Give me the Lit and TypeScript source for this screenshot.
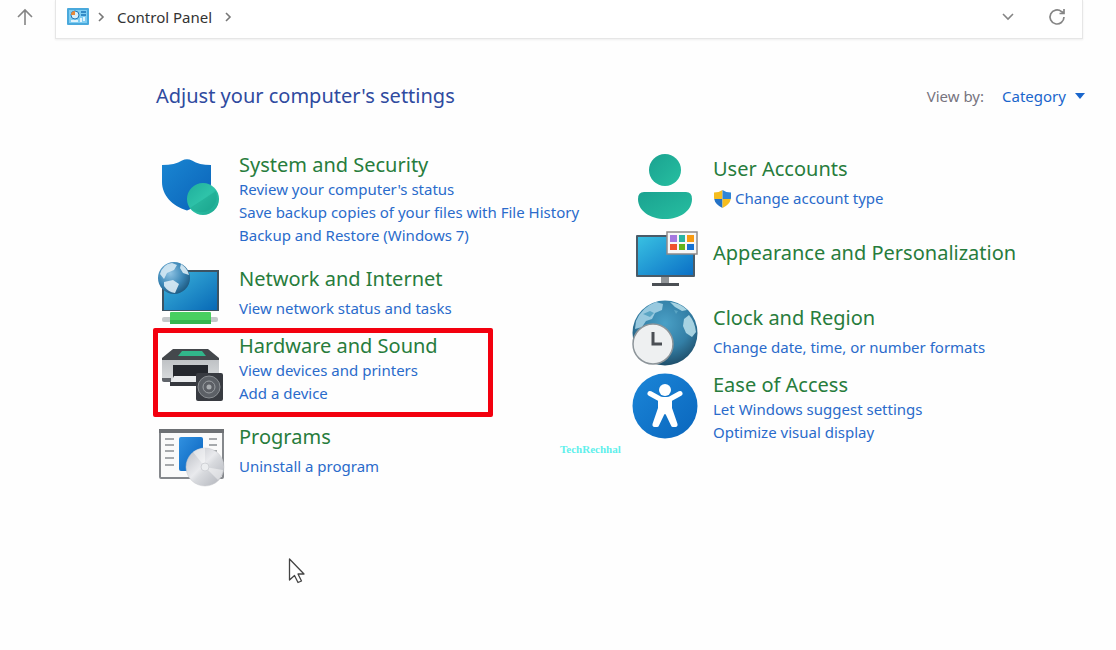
import { LitElement, html, css, svg, nothing, type TemplateResult } from "lit";
import { customElement } from "lit/decorators.js";
import { classMap } from "lit/directives/class-map.js";

interface Task {
  label: string;
  shield?: boolean;
}

interface Category {
  title: string;
  icon: string;
  tasks: Task[];
  marked?: boolean;
}

const LEFT: Category[] = [
  {
    title: "System and Security",
    icon: "security",
    tasks: [
      { label: "Review your computer's status" },
      { label: "Save backup copies of your files with File History" },
      { label: "Backup and Restore (Windows 7)" },
    ],
  },
  { title: "Network and Internet", icon: "network", tasks: [{ label: "View network status and tasks" }] },
  {
    title: "Hardware and Sound",
    icon: "hardware",
    marked: true,
    tasks: [{ label: "View devices and printers" }, { label: "Add a device" }],
  },
  { title: "Programs", icon: "programs", tasks: [{ label: "Uninstall a program" }] },
];

const RIGHT: Category[] = [
  { title: "User Accounts", icon: "users", tasks: [{ label: "Change account type", shield: true }] },
  { title: "Appearance and Personalization", icon: "appearance", tasks: [] },
  { title: "Clock and Region", icon: "clock", tasks: [{ label: "Change date, time, or number formats" }] },
  {
    title: "Ease of Access",
    icon: "access",
    tasks: [{ label: "Let Windows suggest settings" }, { label: "Optimize visual display" }],
  },
];

// Every icon is drawn on a 72 x 72 canvas.
const ICONS: Record<string, TemplateResult> = {
  security: svg`
    <defs>
      <linearGradient id="a" x1="0" y1="0" x2="1" y2="1"><stop offset="0" stop-color="#1a86d2"/><stop offset="1" stop-color="#0a62b8"/></linearGradient>
      <linearGradient id="b" x1="0" y1="0" x2="1" y2="1"><stop offset="0" stop-color="#1fae9c"/><stop offset=".5" stop-color="#2fc3a9"/><stop offset="1" stop-color="#1aa58d"/></linearGradient>
    </defs>
    <path d="M6 16q13 0 20-4.500q5-2.500 10 0q7 4.500 19 4.500v19c0 12-9 21-24 26.500C16 57 6 46 6 33z" fill="url(#a)"/>
    <circle cx="47" cy="50" r="16" fill="url(#b)"/>
    <path d="M34 59l26-17a16 16 0 0 1-26 17z" fill="#159c83" opacity=".35"/>`,
  network: svg`
    <defs>
      <linearGradient id="a" x1="0" y1="0" x2="1" y2="1"><stop offset="0" stop-color="#3cb4dc"/><stop offset="1" stop-color="#0869b6"/></linearGradient>
      <radialGradient id="b" cx=".38" cy=".35" r=".7"><stop offset="0" stop-color="#8fc3e3"/><stop offset=".6" stop-color="#3a86b6"/><stop offset="1" stop-color="#1d587f"/></radialGradient>
    </defs>
    <rect x="6" y="13" width="57" height="41" fill="#3d5362"/>
    <rect x="8" y="15" width="53" height="38" fill="url(#a)"/>
    <rect x="6" y="60" width="56" height="5" rx="2" fill="#c4c9cb"/>
    <rect x="14" y="55" width="41" height="12" rx="1" fill="#48cf60"/>
    <path d="M14 63h41v4H14z" fill="#35b54f"/>
    <circle cx="18" cy="21" r="16" fill="url(#b)"/>
    <path d="M4 17Q7 7 16 6l5 2-3 5-7 3-3 6z" fill="#d5e9f4" opacity=".9"/>
    <path d="M25 7q7 5 8 11l-6-2-3-5zM8 25l9-2 6 4-4 9q-7-1-11-7z" fill="#dcecf5" opacity=".9"/>`,
  hardware: svg`
    <defs>
      <linearGradient id="a" x1="0" y1="0" x2="0" y2="1"><stop offset="0" stop-color="#bfc2c5"/><stop offset="1" stop-color="#d9dcde"/></linearGradient>
    </defs>
    <g transform="translate(0 9)">
      <path d="M17 10h35l11 9v4H6v-4z" fill="#44484c"/>
      <path d="M26 12h20l4 5H22z" fill="#31b68a"/>
      <path d="M6 21h57v21H6z" fill="url(#a)"/>
      <path d="M6 39h9v4H8q-2 0-2-2z" fill="#60646a"/>
      <path d="M17 26h35v13H17z" fill="#24272d"/>
      <path d="M18 37h32v6H15z" fill="#e9ebed"/>
      <path d="M14 43h28v4H14z" fill="#35383e"/>
      <rect x="40" y="34" width="27" height="28" rx="2" fill="#383b41"/>
      <circle cx="53" cy="48" r="11" fill="#5c6066" stroke="#8a8e92" stroke-width="1"/>
      <circle cx="53" cy="48" r="6" fill="#5c5f65" stroke="#9b9fa3" stroke-width="1"/>
      <circle cx="53" cy="48" r="2.500" fill="#a9adb0"/>
    </g>`,
  programs: svg`
    <defs>
      <linearGradient id="a" x1="0" y1="0" x2="1" y2="1"><stop offset="0" stop-color="#3191e0"/><stop offset="1" stop-color="#0761bd"/></linearGradient>
      <linearGradient id="b" x1="0" y1="0" x2="1" y2="1"><stop offset="0" stop-color="#b9bcc3"/><stop offset=".45" stop-color="#e9eaed"/><stop offset=".55" stop-color="#d8dade"/><stop offset="1" stop-color="#aeb1b8"/></linearGradient>
    </defs>
    <g transform="translate(0 4)">
      <rect x="4" y="11" width="63" height="48" rx="1" fill="#fafafa" stroke="#85888c" stroke-width="2"/>
      <path d="M3 10h65v4H3z" fill="#6d7074"/>
      <path d="M9 20h9M9 26h9M9 32h9M9 39h9M9 46h9M53 20h8M53 26h8M53 32h8" stroke="#8b8e92" stroke-width="1.500"/>
      <rect x="23" y="18" width="24" height="34" rx="2" fill="url(#a)"/>
      <circle cx="49" cy="48" r="19" fill="url(#b)" stroke="#c6c8cc" stroke-width=".5"/>
      <path d="M49 48L37 33q5-4 12-4zM49 48l13 13q4-4 5-10z" fill="#fff" opacity=".45"/>
      <circle cx="49" cy="48" r="4" fill="#eceef0" stroke="#d0d2d6" stroke-width="1"/>
    </g>`,
  users: svg`
    <defs>
      <linearGradient id="a" x1="0" y1="0" x2="1" y2="1"><stop offset="0" stop-color="#1aa290"/><stop offset="1" stop-color="#27bfa1"/></linearGradient>
    </defs>
    <g transform="translate(0 4)">
      <circle cx="35" cy="19" r="16" fill="url(#a)"/>
      <path d="M14 41h42q6 0 6 7c0 12-12 20-27 20S8 60 8 48q0-7 6-7z" fill="url(#a)"/>
    </g>`,
  appearance: svg`
    <defs>
      <linearGradient id="a" x1="0" y1="0" x2="1" y2="1"><stop offset="0" stop-color="#38c0e2"/><stop offset="1" stop-color="#0b70c6"/></linearGradient>
    </defs>
    <g transform="translate(0 7)">
      <rect x="6" y="11" width="59" height="42" rx="1" fill="#4a5b68"/>
      <rect x="8" y="13" width="55" height="38" fill="url(#a)"/>
      <path d="M31 53h8v7h-8z" fill="#929699"/>
      <path d="M22 59h27v3H22z" fill="#4b4f54"/>
      <rect x="37" y="8" width="30" height="22" fill="#f7f7f7" stroke="#8f8a8a" stroke-width="1.500"/>
      <path d="M40 11h7v7h-7z" fill="#a477df"/><path d="M49 11h6v7h-6z" fill="#29b4a2"/><path d="M57 11h7v7h-7z" fill="#f79a12"/>
      <path d="M40 20h7v6h-7z" fill="#f0512c"/><path d="M49 20h6v6h-6z" fill="#64b31b"/><path d="M57 20h7v6h-7z" fill="#1572d4"/>
    </g>`,
  clock: svg`
    <defs>
      <radialGradient id="a" cx=".5" cy=".35" r=".65"><stop offset="0" stop-color="#4aa0c6"/><stop offset=".6" stop-color="#337fa6"/><stop offset="1" stop-color="#1f4f6b"/></radialGradient>
    </defs>
    <g transform="translate(0 1)">
      <circle cx="35" cy="36" r="32.500" fill="url(#a)"/>
      <path d="M6 24Q12 10 26 5l7 2-1 6-7 3-3 6-6 2-4 6-7 2z" fill="#a3d0e4" opacity=".9"/>
      <path d="M40 5q10 1 17 8l-5 1-7-4zM54 22l5-4q6 7 7 17l-4 5-6-4-3-7z" fill="#b4dbe8" opacity=".9"/>
      <path d="M13 17l7-3 4 2-4 4zM44 13l4 1-2 3z" fill="#5aa5c4"/>
      <circle cx="23" cy="47" r="20" fill="#eef0f1" stroke="#8c9499" stroke-width="1.500"/>
      <path d="M23 35v12h9" fill="none" stroke="#4b4f54" stroke-width="3"/>
    </g>`,
  access: svg`
    <defs>
      <linearGradient id="a" x1="0" y1="0" x2="1" y2="1"><stop offset="0" stop-color="#1b86d8"/><stop offset="1" stop-color="#0a66bd"/></linearGradient>
    </defs>
    <g transform="translate(0 1)">
      <circle cx="35" cy="36" r="32.500" fill="url(#a)"/>
      <circle cx="35" cy="20" r="6" fill="#fff"/>
      <path d="M20 23.500l10 5.500q5 1.500 10 0l10-5.500" fill="none" stroke="#fff" stroke-width="5" stroke-linecap="round" stroke-linejoin="round"/>
      <path d="M28 27h14v11l5.500 16q.5 2.500-2 3h-2.500q-1.500 0-2-1.500L36 45q-1-2-2 0l-5 10.500q-.5 1.500-2 1.500h-2.500q-2.500-.5-2-3L28 38z" fill="#fff"/>
    </g>`,
};

@customElement("cp-icon")
class CpIcon extends LitElement {
  static properties = { name: {} };
  declare name: string;
  static styles = css`
    :host {
      display: block;
    }
    .art {
      display: block;
      width: 72px;
      height: 72px;
      overflow: visible;
    }
  `;
  render() {
    return html`<svg class="art" viewBox="0 0 72 72" aria-hidden="true">${ICONS[this.name]}</svg>`;
  }
}

@customElement("app-root")
class AppRoot extends LitElement {
  static styles = css`
    :host {
      display: block;
      position: relative;
      min-height: 100vh;
      background: #fefefe;
      font-family: "Noto Sans", "Open Sans", sans-serif;
      font-size: 15px;
      color: #333;
    }
    a {
      color: #2a6bcb;
      text-decoration: none;
    }
    button {
      display: grid;
      place-items: center;
      padding: 0;
      border: 0;
      background: none;
      color: #858585;
    }
    .toolbar {
      display: flex;
      padding-right: 33px;
    }
    .up {
      width: 49px;
      height: 33px;
      margin-right: 6px;
    }
    .address {
      flex: 1;
      display: flex;
      align-items: center;
      height: 33px;
      padding: 0 16px 5px 11px;
      border: 1px solid #e6e6e6;
      border-top: 0;
      box-shadow: 0 1px 2px #eee;
      background: #fff;
    }
    .place {
      margin-right: 8px;
    }
    .crumb {
      margin: 0 12px;
      color: #333;
    }
    .address .drop {
      margin-left: auto;
      margin-right: 34px;
    }
    .heading {
      display: flex;
      align-items: center;
      justify-content: space-between;
      margin: 43px 31px 0 156px;
    }
    h1 {
      margin: 0;
      font-size: 20px;
      line-height: 28px;
      font-weight: 400;
      color: #2f4a9f;
    }
    .view {
      display: flex;
      align-items: center;
      color: #77747f;
    }
    .choice {
      display: grid;
      align-items: center;
      margin-left: 18px;
      color: #1a66cc;
    }
    .choice select {
      grid-area: 1 / 1;
      width: 83px;
      padding: 0;
      border: 0;
      appearance: none;
      background: none;
      font: inherit;
      color: inherit;
    }
    .choice svg {
      grid-area: 1 / 1;
      justify-self: end;
      pointer-events: none;
    }
    .categories {
      display: grid;
      grid-template-columns: 1fr 1fr;
      padding: 42px 12px 0 156px;
    }
    .column {
      display: flex;
      flex-direction: column;
      gap: 9px;
    }
    .item {
      position: relative;
      display: flex;
      align-items: center;
      gap: 11px;
      min-height: 62px;
    }
    .item cp-icon {
      margin: -6px 0;
    }
    .item.tall {
      align-items: flex-start;
      margin-bottom: 6px;
    }
    .item.tall cp-icon {
      margin: -3px 0;
    }
    .item.bare {
      min-height: 60px;
      margin-bottom: 9px;
    }
    .item.marked::after {
      content: "";
      position: absolute;
      inset: -5px auto -12px -3px;
      width: 330px;
      border: 5px solid #f3000e;
      border-radius: 2px;
      pointer-events: none;
    }
    h2 {
      margin: 0;
      font-size: 20px;
      line-height: 26px;
      font-weight: 400;
    }
    h2 a {
      color: #277c3c;
    }
    ul {
      margin: 0;
      padding: 0;
      list-style: none;
      line-height: 23px;
    }
    .single {
      padding-top: 5px;
    }
    .task {
      display: flex;
      align-items: center;
      gap: 3px;
    }
    .watermark {
      position: absolute;
      left: 560px;
      top: 442px;
      font: bold 11px/14px "Liberation Serif", serif;
      color: #5ff0ec;
    }
    .pointer {
      position: absolute;
      left: 287px;
      top: 557px;
    }
  `;

  private chevron() {
    return html`<svg width="8" height="10" viewBox="0 0 8 10" fill="none" stroke="#777" stroke-width="1.600" aria-hidden="true"><path d="M2 1l4 4-4 4" /></svg>`;
  }

  private shield() {
    return html`<svg width="19" height="20" viewBox="0 0 19 20" aria-hidden="true">
      <path d="M9.500 1Q6 3.500 1 3.500V9l.2 1h8.300z" fill="#f5bd1f" />
      <path d="M9.500 1Q13 3.500 18 3.500V9l-.2 1H9.500z" fill="#2f86d6" />
      <path d="M1.200 10h8.300v9Q2.200 15.500 1.200 10z" fill="#2472c6" />
      <path d="M17.800 10H9.500v9q7.300-3.500 8.300-9z" fill="#f5bd1f" />
    </svg>`;
  }

  private item(c: Category) {
    const n = c.tasks.length;
    const kind = { item: true, tall: n > 1, bare: n === 0, marked: !!c.marked };
    return html`<section class=${classMap(kind)}>
      <cp-icon name=${c.icon}></cp-icon>
      <div>
        <h2><a href="#">${c.title}</a></h2>
        ${n
          ? html`<ul class=${classMap({ single: n === 1 })}>
              ${c.tasks.map((t) => html`<li><a class="task" href="#">${t.shield ? this.shield() : nothing}${t.label}</a></li>`)}
            </ul>`
          : nothing}
      </div>
    </section>`;
  }

  render() {
    return html`
      <nav class="toolbar" aria-label="Address">
        <button class="up" aria-label="Up">
          <svg width="18" height="18" viewBox="0 0 18 18" fill="none" stroke="currentColor" stroke-width="1.600"><path d="M9 17V2M2 9l7-7 7 7" /></svg>
        </button>
        <div class="address">
          <svg class="place" width="22" height="17" viewBox="0 0 22 17" aria-hidden="true">
            <rect width="22" height="17" rx="1" fill="#4aa9dc" />
            <rect x="2" y="2" width="18" height="13" fill="#7fcdf2" />
            <circle cx="8" cy="7" r="4" fill="#d9effa" stroke="#2378b8" />
            <path d="M8 7V3a4 4 0 0 0-4 4z" fill="#e8893c" />
            <path d="M14 4h5M14 7h5" stroke="#1c76b8" stroke-width="1.500" />
            <path d="M4 13h7M14 10v4M17 9v4" stroke="#dff3fc" stroke-width="2" />
          </svg>
          ${this.chevron()}
          <a class="crumb" href="#">Control Panel</a>
          ${this.chevron()}
          <button class="drop" aria-label="Previous locations">
            <svg width="12" height="8" viewBox="0 0 12 8" fill="none" stroke="currentColor" stroke-width="1.600"><path d="M1 1l5 5 5-5" /></svg>
          </button>
          <button aria-label="Refresh">
            <svg width="18" height="18" viewBox="0 0 18 18" fill="none" stroke="currentColor" stroke-width="1.700"><path d="M16 9a7 7 0 1 1-2.500-5.400L16 5M16 1v4.500h-4.500" /></svg>
          </button>
        </div>
      </nav>
      <main>
        <header class="heading">
          <h1>Adjust your computer's settings</h1>
          <div class="view">
            <label for="view">View by:</label>
            <span class="choice">
              <select id="view">
                <option>Category</option>
                <option>Large icons</option>
                <option>Small icons</option>
              </select>
              <svg width="10" height="6" viewBox="0 0 10 6" aria-hidden="true"><path d="M0 0h10L5 6z" fill="currentColor" /></svg>
            </span>
          </div>
        </header>
        <div class="categories">
          <div class="column">${LEFT.map((c) => this.item(c))}</div>
          <div class="column">${RIGHT.map((c) => this.item(c))}</div>
        </div>
      </main>
      <span class="watermark">TechRechhal</span>
      <svg class="pointer" width="18" height="28" viewBox="0 0 18 28" aria-hidden="true">
        <path d="M2.500 2v21l5-4.500 3.500 7 3.500-1.500-3.500-7h6z" fill="#fff" stroke="#444" stroke-width="1.300" stroke-linejoin="round" />
      </svg>
    `;
  }
}
